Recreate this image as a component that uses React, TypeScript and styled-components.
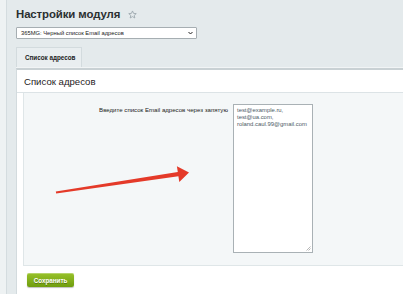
import styled, { createGlobalStyle } from 'styled-components';

const GlobalStyle = createGlobalStyle`
  html, body {
    margin: 0;
    padding: 0;
    background: #e4eaec;
    font-family: "Liberation Sans", Arial, sans-serif;
  }
  #root {
    min-height: 100vh;
  }
`;

const Layout = styled.div`
  display: flex;
  min-height: 294px;
  overflow: hidden;
`;

const SideStrip = styled.div`
  width: 6px;
  flex: none;
  background: #eef2f3;
  border-right: 1px solid #d4dcdf;
`;

const Main = styled.div`
  flex: 1;
  min-width: 0;
  padding: 6px 0 0 9px;
  display: flex;
  flex-direction: column;
`;

const TitleRow = styled.div`
  display: flex;
  align-items: center;
  gap: 8px;
  height: 16px;
`;

const Title = styled.h1`
  margin: 0;
  font-size: 11.4px;
  font-weight: bold;
  color: #2b2f31;
  letter-spacing: -0.1px;
`;

const ModuleSelect = styled.div`
  margin-top: 5px;
  width: 172px;
  height: 10px;
  box-sizing: content-box;
  border: 1px solid #a6aeb2;
  border-radius: 1px;
  background: #fff;
  display: flex;
  align-items: center;
  justify-content: space-between;
  padding: 0 3px 0 4px;
  font-size: 5.8px;
  color: #222;
`;

const TabBar = styled.div`
  margin-top: 8px;
  height: 20px;
  display: flex;
  border-bottom: 1px solid #f1f4f5;
`;

const Tab = styled.div<{ $active?: boolean }>`
  width: 56px;
  padding-left: 8px;
  display: flex;
  align-items: center;
  font-size: 6.3px;
  font-weight: bold;
  color: #222;
  background: ${p => (p.$active ? '#e9eef0' : 'transparent')};
  border: 1px solid #d3dbde;
  border-bottom: none;
`;

const Panel = styled.div`
  flex: 1;
  background: #fff;
  border-top: 2px solid #c9d1d4;
  border-left: 1px solid #d3dbde;
  padding-bottom: 8px;
`;

const PanelHeading = styled.div`
  height: 22px;
  display: flex;
  align-items: center;
  padding-left: 7px;
  font-size: 9.6px;
  color: #1f2224;
  border-bottom: 1px solid #dce3e6;
`;

const Content = styled.div`
  position: relative;
  margin-left: 6px;
  background: #f4f7f8;
  border: 1px solid #dfe6e8;
  border-top: none;
  border-right: none;
  padding: 11px 0 12px;
  display: grid;
  grid-template-columns: 204px 80px;
  column-gap: 5px;
  align-items: start;
`;

const FieldLabel = styled.label`
  text-align: right;
  font-size: 6.1px;
  color: #222;
  padding-top: 2px;
`;

const EmailArea = styled.div`
  position: relative;
  height: 143px;
  background: #fff;
  border: 1px solid #a9b1b5;
  padding: 2px 3px;
  font-size: 5.9px;
  line-height: 7px;
  color: #4c5a66;
`;

const Grip = styled.svg`
  position: absolute;
  right: 1px;
  bottom: 1px;
`;

const Arrow = styled.svg`
  position: absolute;
  left: 0;
  top: 0;
  pointer-events: none;
`;

const Footer = styled.div`
  display: flex;
  padding: 7px 0 0 10px;
`;

const SaveButton = styled.button`
  width: 47px;
  height: 14px;
  padding: 0;
  border: none;
  border-radius: 2px;
  background: linear-gradient(#98c22a, #6f9d0e);
  box-shadow: 0 1px 1px rgba(0, 0, 0, 0.25), inset 0 1px 0 rgba(255, 255, 255, 0.3);
  color: #fff;
  font-family: inherit;
  font-size: 6.3px;
  font-weight: bold;
  text-shadow: 0 1px 0 rgba(0, 0, 0, 0.3);
`;

const EMAILS = ['test@example.ru,', 'test@ua.com,', 'roland.caul.99@gmail.com'];

export default function App() {
  return (
    <>
      <GlobalStyle />
      <Layout>
        <SideStrip />
        <Main>
          <TitleRow>
            <Title>Настройки модуля</Title>
            <svg width="9" height="9" viewBox="0 0 24 24" fill="none" stroke="#98a4aa" strokeWidth="2.2" strokeLinejoin="round">
              <polygon points="12,2.5 14.9,9 22,9.6 16.6,14.3 18.2,21.3 12,17.6 5.8,21.3 7.4,14.3 2,9.6 9.1,9" />
            </svg>
          </TitleRow>
          <ModuleSelect>
            <span>365MG: Черный список Email адресов</span>
            <svg width="5" height="4" viewBox="0 0 10 6">
              <path d="M1 1l4 4 4-4" fill="none" stroke="#222" strokeWidth="2" />
            </svg>
          </ModuleSelect>
          <TabBar>
            <Tab $active>Список адресов</Tab>
          </TabBar>
          <Panel>
            <PanelHeading>Список адресов</PanelHeading>
            <Content>
              <FieldLabel>Введите список Email адресов через запятую</FieldLabel>
              <EmailArea>
                {EMAILS.map(e => (
                  <div key={e}>{e}</div>
                ))}
                <Grip width="5" height="5" viewBox="0 0 5 5">
                  <path d="M4.5 0.5L0.5 4.5M4.5 2.5L2.5 4.5" stroke="#999" strokeWidth="0.7" />
                </Grip>
              </EmailArea>
              <Arrow width="180" height="110" viewBox="0 0 180 110">
                <polygon
                  points="31.8,98.5 153.8,78.9 152.9,73.2 165,79.5 155.3,89 154.4,83.3 32.2,100.5"
                  fill="#e43a29"
                />
              </Arrow>
            </Content>
            <Footer>
              <SaveButton>Сохранить</SaveButton>
            </Footer>
          </Panel>
        </Main>
      </Layout>
    </>
  );
}
